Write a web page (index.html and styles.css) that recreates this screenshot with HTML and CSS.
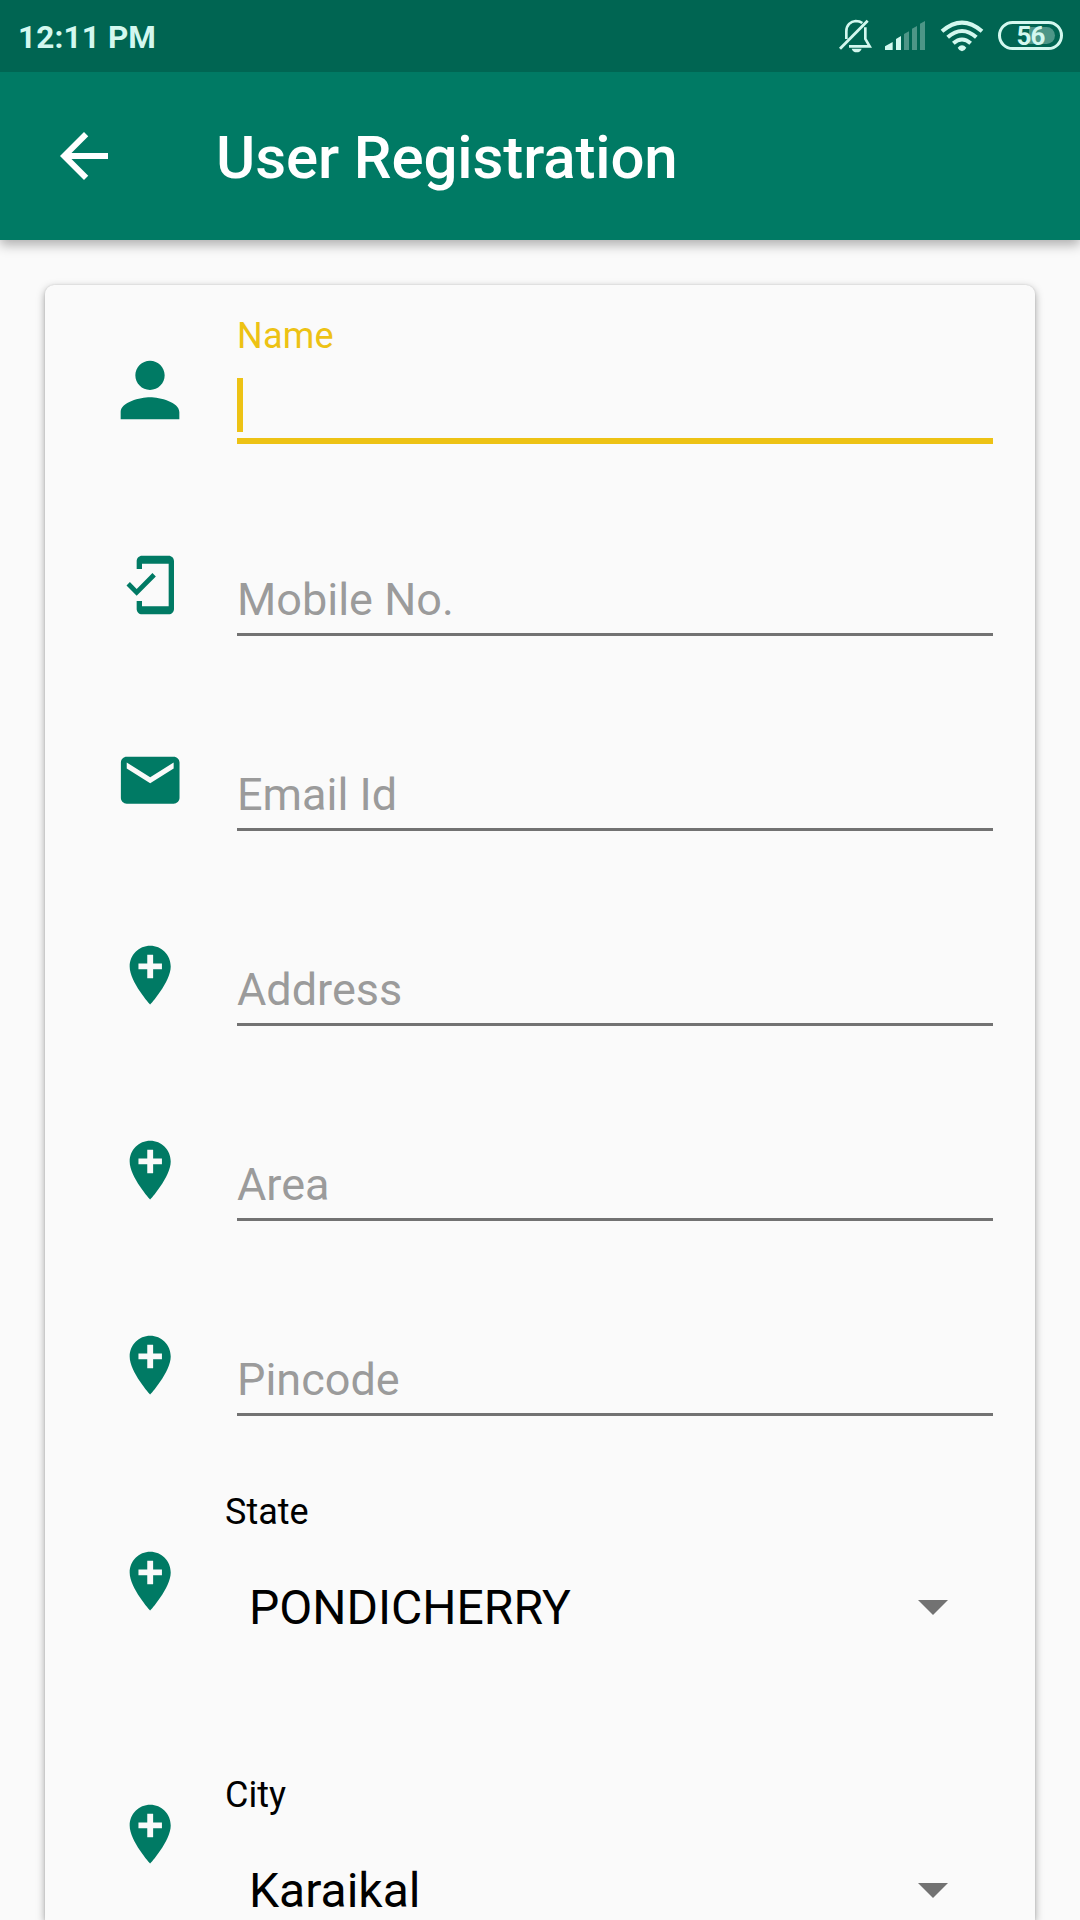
FILE: index.html
```html
<!DOCTYPE html>
<html lang="en">
<head>
<meta charset="utf-8">
<title>User Registration</title>
<link rel="stylesheet" href="styles.css">
</head>
<body>
<svg class="defs" width="0" height="0" aria-hidden="true">
  <symbol id="pin" viewBox="0 0 24 24"><path d="M12 2C8.14 2 5 5.14 5 9c0 5.25 7 13 7 13s7-7.75 7-13c0-3.86-3.14-7-7-7zm4 8h-3v3h-2v-3H8V8h3V5h2v3h3v2z"/></symbol>
</svg>
<header class="header">
  <div class="status-bar">
    <span class="clock">12:11 PM</span>
    <div class="status-icons">
      <svg class="bell" viewBox="54 54 102 105">
        <g fill="none" stroke="#d3f8ef" stroke-width="8">
          <path d="M79 117V94C79 75 92 64 107 63C115 63 122 65 127 69"/>
          <path d="M136 82V117L149 139H87"/>
          <path d="M60 146L143 62" stroke-width="8.500"/>
        </g>
        <path fill="#d3f8ef" d="M95 146h30c-2 7-8 11-15 11s-13-4-15-11z"/>
      </svg>
      <svg class="signal" viewBox="192 57 126 96">
        <path fill="#d3f8ef" d="M195 150v-11l23-13v24zM228 150v-33l15-9v42z"/>
        <path fill="#4d9687" d="M252 150v-48l15-8v56zM276 150v-64l15-8v72zM300 150V71l15-8v87z"/>
      </svg>
      <svg class="wifi" viewBox="360 57 132 99">
        <g fill="none" stroke="#d3f8ef" stroke-width="12">
          <path d="M366 94Q426 42 486 94"/>
          <path d="M383 112Q426 74 469 112"/>
          <path d="M400 130Q426 107 452 130"/>
        </g>
        <path fill="#d3f8ef" d="M413 143Q426 129 439 143Q434 153 426 154Q418 153 413 143z"/>
      </svg>
      <div class="battery"><span class="battery-level"></span><span class="battery-text">56</span></div>
    </div>
  </div>
  <div class="toolbar">
    <svg class="back" viewBox="0 0 24 24"><path d="M20 11H7.830l5.590-5.590L12 4l-8 8 8 8 1.410-1.410L7.830 13H20v-2z"/></svg>
    <h1 class="title">User Registration</h1>
  </div>
</header>
<main class="card">
  <div class="row">
    <div class="icon-cell"><svg class="icon icon-person" viewBox="0 0 24 24"><path d="M12 12c2.210 0 4-1.790 4-4s-1.790-4-4-4-4 1.790-4 4 1.790 4 4 4zm0 2c-2.670 0-8 1.340-8 4v2h16v-2c0-2.660-5.330-4-8-4z"/></svg></div>
    <div class="field focused">
      <span class="label">Name</span>
      <div class="input"><span class="caret"></span></div>
    </div>
  </div>
  <div class="row">
    <div class="icon-cell"><svg class="icon icon-phone" viewBox="0 0 24 24"><path d="M19 1H9c-1.100 0-2 .9-2 2v3h2V4h10v16H9v-2H7v3c0 1.100.9 2 2 2h10c1.100 0 2-.9 2-2V3c0-1.100-.9-2-2-2zM7.010 13.470l-2.550-2.550-1.270 1.270L7 16l7.190-7.190-1.270-1.270z"/></svg></div>
    <div class="field"><span class="label"></span><div class="input">Mobile No.</div></div>
  </div>
  <div class="row">
    <div class="icon-cell"><svg class="icon" viewBox="0 0 24 24"><path d="M20 4H4c-1.100 0-1.990.9-1.990 2L2 18c0 1.100.9 2 2 2h16c1.100 0 2-.9 2-2V6c0-1.100-.9-2-2-2zm0 4l-8 5-8-5V6l8 5 8-5v2z"/></svg></div>
    <div class="field"><span class="label"></span><div class="input">Email Id</div></div>
  </div>
  <div class="row">
    <div class="icon-cell"><svg class="icon"><use href="#pin"/></svg></div>
    <div class="field"><span class="label"></span><div class="input">Address</div></div>
  </div>
  <div class="row">
    <div class="icon-cell"><svg class="icon"><use href="#pin"/></svg></div>
    <div class="field"><span class="label"></span><div class="input">Area</div></div>
  </div>
  <div class="row">
    <div class="icon-cell"><svg class="icon"><use href="#pin"/></svg></div>
    <div class="field"><span class="label"></span><div class="input">Pincode</div></div>
  </div>
  <div class="row row-select">
    <div class="icon-cell"><svg class="icon"><use href="#pin"/></svg></div>
    <div class="select">
      <span class="select-label">State</span>
      <div class="select-value"><span>PONDICHERRY</span><i class="arrow"></i></div>
    </div>
  </div>
  <div class="row row-select row-city">
    <div class="icon-cell"><svg class="icon"><use href="#pin"/></svg></div>
    <div class="select">
      <span class="select-label">City</span>
      <div class="select-value"><span>Karaikal</span><i class="arrow"></i></div>
    </div>
  </div>
</main>
</body>
</html>
```
FILE: styles.css
```css
* { box-sizing: border-box; }
html, body { margin: 0; height: 1920px; overflow: hidden; }
body {
  background: #fafafa;
  font-family: Roboto, "Liberation Sans", sans-serif;
  color: #000;
}
svg { display: block; }
.defs { position: absolute; }

.header {
  height: 240px;
  background: #007a64;
  box-shadow: 0 5px 11px rgba(0, 0, 0, .3);
}
.status-bar {
  height: 72px;
  padding: 0 16px 0 18px;
  background: #006552;
  display: flex;
  justify-content: space-between;
}
.clock {
  font-size: 31.500px;
  font-weight: 700;
  line-height: 75px;
  letter-spacing: .15px;
  color: #d3f8ef;
}
.status-icons { display: flex; }
.bell { width: 34px; height: 35px; margin: 18px 12px 0 0; }
.signal { width: 42px; height: 32px; margin: 19px 14px 0 0; }
.wifi { width: 44px; height: 33px; margin: 19px 14px 0 0; }
.battery {
  position: relative;
  width: 65px;
  height: 29px;
  margin: 21px 1px 0 0;
  border: 3px solid #d3f8ef;
  border-radius: 15px;
  color: #d3f8ef;
  font-size: 26px;
  font-weight: 700;
  line-height: 24px;
  text-align: center;
}
.battery-level {
  position: absolute;
  left: 3px;
  top: 3px;
  width: 51px;
  height: 17px;
  border-radius: 9px;
  background: linear-gradient(90deg, #006552 50%, #4d9687 50%);
}
.battery-text { position: relative; letter-spacing: -.8px; }

.toolbar { height: 168px; display: flex; align-items: center; }
.back { width: 72px; height: 72px; margin-left: 48px; fill: #fff; }
.title {
  margin: 4px 0 0 96px;
  font-size: 60px;
  font-weight: 500;
  line-height: 72px;
  letter-spacing: -.12px;
  color: #fff;
}

.card {
  width: 990px;
  height: 1635px;
  margin: 45px auto 0;
  border-radius: 9px 9px 0 0;
  background: #fafafa;
  box-shadow: 0 3px 8px rgba(0, 0, 0, .36), 0 0 2px rgba(0, 0, 0, .12);
}
.row { height: 195px; display: flex; }
.icon-cell {
  width: 192px;
  height: 195px;
  padding: 15px 0 0 18px;
  display: flex;
  align-items: center;
  justify-content: center;
}
.icon { width: 70.400px; height: 70.400px; fill: #007a64; }
.icon-person { width: 88px; height: 88px; }
.icon-phone { width: 64px; height: 64px; }

.field { width: 756px; padding-top: 30px; }
.label {
  display: block;
  height: 42px;
  font-size: 36px;
  line-height: 42px;
  letter-spacing: .2px;
  color: #edc214;
}
.input {
  height: 84px;
  padding-top: 21px;
  border-bottom: 3px solid #727272;
  font-size: 45px;
  line-height: 54px;
  color: #9b9b9b;
}
.focused .input { height: 87px; border-bottom: 6px solid #edc214; }
.caret { display: block; width: 6px; height: 54px; background: #edc214; }

.row-select { height: 283px; }
.row-select .icon-cell { width: 180px; height: 253px; padding: 0 0 0 30px; }
.row-city { height: 182px; }
.row-city .icon-cell { height: 182px; padding-top: 11px; }
.select { width: 780px; padding-top: 36px; }
.select-label { display: block; font-size: 36px; line-height: 43px; }
.select-value {
  display: flex;
  justify-content: space-between;
  align-items: center;
  margin-top: 45px;
  padding: 0 57px 0 24px;
  font-size: 48px;
  line-height: 58px;
}
.arrow {
  width: 30px;
  height: 15px;
  margin-bottom: 1px;
  background: #727272;
  clip-path: polygon(0 0, 100% 0, 50% 100%);
}
```
